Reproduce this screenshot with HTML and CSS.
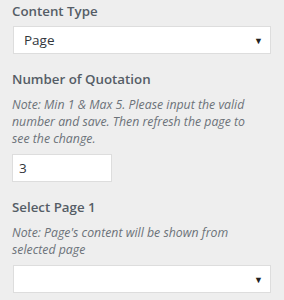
FILE: index.html
```html
<!DOCTYPE html>
<html>
<head>
  <title>Customizer Section</title>
  <link rel="stylesheet" href="styles.css">
</head>
<body>
  <div class="panel">
    <div class="control">
      <span class="control-title">Content Type</span>
      <div class="select-box">
        <span class="select-value">Page</span>
        <span class="select-arrow">&#9660;</span>
      </div>
    </div>

    <div class="control">
      <span class="control-title">Number of Quotation</span>
      <p class="control-note">Note: Min 1 &amp; Max 5. Please input the valid number and save. Then refresh the page to see the change.</p>
      <div class="number-box">3</div>
    </div>

    <div class="control">
      <span class="control-title">Select Page 1</span>
      <p class="control-note">Note: Page's content will be shown from selected page</p>
      <div class="select-box">
        <span class="select-value"></span>
        <span class="select-arrow">&#9660;</span>
      </div>
    </div>
  </div>
</body>
</html>
```

FILE: styles.css
```css
/* customizer panel */
body {
  margin: 0;
  padding: 0;
  background-color: #eeeeee;
  font-family: "Open Sans", "Noto Sans", sans-serif;
  color: #555d66;
}

.panel {
  padding: 1px 13px 0 12px;
}

.control {
  display: flex;
  flex-direction: column;
  margin-bottom: 15px;
}

.control-title {
  font-size: 13.3px;
  font-weight: 600;
  line-height: 20px;
  margin-bottom: 5px;
}

.control-title + .control-note {
  margin-top: 2px;
}

.control-note {
  margin: 0 0 7px 0;
  padding-right: 10px;
  font-size: 12.3px;
  font-style: italic;
  line-height: 17px;
  color: #6c7279;
}

/* select dropdown */
.select-box {
  display: flex;
  justify-content: space-between;
  align-items: center;
  height: 26px;
  margin-left: 1px;
  border: 1px solid #dddddd;
  background-color: #ffffff;
  padding: 0 7px 0 10px;
  font-size: 13.5px;
  color: #32373c;
}

.select-arrow {
  font-size: 9px;
  color: #222222;
}

/* number input */
.number-box {
  width: 92px;
  height: 26px;
  line-height: 26px;
  border: 1px solid #dddddd;
  background-color: #ffffff;
  padding-left: 6px;
  font-size: 13.5px;
  color: #32373c;
}
```
